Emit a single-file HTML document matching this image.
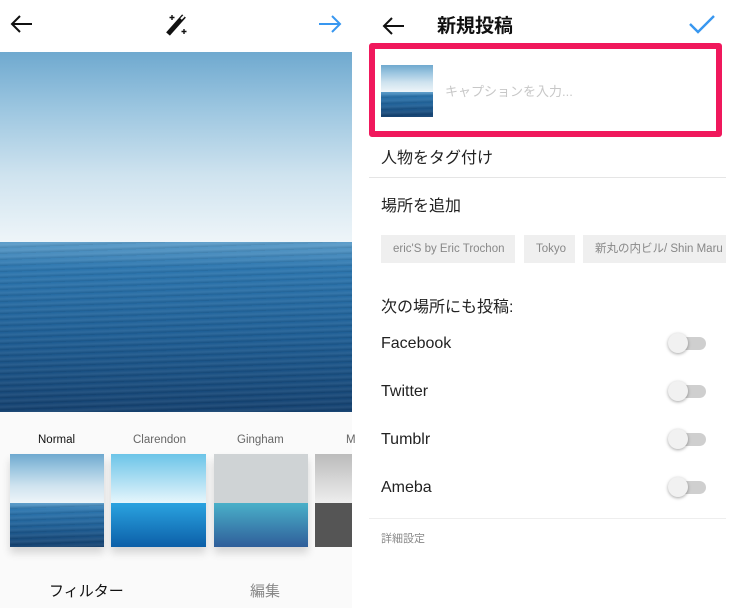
<!DOCTYPE html>
<html><head><meta charset="utf-8"><style>
*{margin:0;padding:0;box-sizing:border-box}
body{width:730px;height:608px;background:#fff;position:relative;overflow:hidden;font-family:"Liberation Sans","Noto Sans CJK JP",sans-serif;color:#222}
.a{position:absolute}
.sky{background:linear-gradient(180deg,#6fa9cf 0%,#9cc6e0 30%,#cfe3ef 65%,#eef5f9 100%)}
.sea{background:repeating-linear-gradient(178deg,rgba(255,255,255,0) 0px,rgba(255,255,255,.08) 3px,rgba(0,0,0,.08) 6px),linear-gradient(180deg,#5b9cc9 0%,#2a74ad 15%,#1c5c93 55%,#123f6e 100%)}
.t{position:absolute;font-size:11.5px;color:#666}
.tog{position:absolute;left:668px;width:38px;height:20px}
.tog .tr{position:absolute;left:8px;top:4px;width:30px;height:13px;border-radius:7px;background:#cfcfcf}
.tog .kn{position:absolute;left:0;top:0;width:20px;height:20px;border-radius:50%;background:#f1f1f1;box-shadow:0 1px 3px rgba(0,0,0,.35)}
.lbl{position:absolute;left:381px;font-size:16px;color:#222}
.chip{position:absolute;top:235px;height:28px;background:#efefef;font-size:11.5px;color:#888;line-height:28px;padding-left:12px;white-space:nowrap;overflow:hidden}
</style></head><body>
<svg class="a" style="left:8px;top:12px" width="28" height="24" viewBox="0 0 28 24"><path d="M24 12H5M12 4L4 12L12 20" stroke="#111" stroke-width="2" fill="none"/></svg>
<svg class="a" style="left:164px;top:10px" width="30" height="28" viewBox="0 0 30 28"><path d="M4 24L20 6" stroke="#111" stroke-width="5"/><path d="M17 9L20 6" stroke="#fff" stroke-width="2"/><path d="M8 5v5M5.5 7.5h5M20 19v5M17.5 21.5h5" stroke="#111" stroke-width="1.4"/></svg>
<svg class="a" style="left:316px;top:12px" width="28" height="24" viewBox="0 0 28 24"><path d="M3 12H23M16 4L24 12L16 20" stroke="#3897f0" stroke-width="2" fill="none"/></svg>
<div class="a sky" style="left:0;top:52px;width:352px;height:190px"></div>
<div class="a sea" style="left:0;top:242px;width:352px;height:170px"></div>
<div class="a" style="left:0;top:412px;width:352px;height:196px;background:#fafafa"></div>
<div class="t" style="left:38px;top:434px;color:#111">Normal</div>
<div class="t" style="left:133px;top:434px">Clarendon</div>
<div class="t" style="left:237px;top:434px">Gingham</div>
<div class="t" style="left:346px;top:434px">M</div>
<div class="a" style="left:10px;top:454px;width:94px;height:93px;box-shadow:0 6px 8px rgba(0,0,0,.15)"><div class="sky" style="height:49px"></div><div class="sea" style="height:44px"></div></div>
<div class="a" style="left:111px;top:454px;width:95px;height:93px;box-shadow:0 6px 8px rgba(0,0,0,.15)"><div style="height:49px;background:linear-gradient(#6cc4e8,#e6f6fc)"></div><div style="height:44px;background:linear-gradient(#2aa3e0,#0c5fa8)"></div></div>
<div class="a" style="left:214px;top:454px;width:94px;height:93px;box-shadow:0 6px 8px rgba(0,0,0,.15)"><div style="height:49px;background:#cfd3d5"></div><div style="height:44px;background:linear-gradient(#4ab0c9,#2f5e9a)"></div></div>
<div class="a" style="left:315px;top:454px;width:37px;height:93px"><div style="height:49px;background:linear-gradient(#bbb,#eee)"></div><div style="height:44px;background:#555"></div></div>
<div class="a" style="left:49px;top:580px;font-size:15px;color:#111">フィルター</div>
<div class="a" style="left:250px;top:580px;font-size:15px;color:#888">編集</div>
<svg class="a" style="left:380px;top:14px" width="28" height="24" viewBox="0 0 28 24"><path d="M24 12H5M12 4L4 12L12 20" stroke="#111" stroke-width="2" fill="none"/></svg>
<div class="a" style="left:437px;top:11px;font-size:19px;font-weight:bold;color:#111">新規投稿</div>
<svg class="a" style="left:688px;top:13px" width="28" height="22" viewBox="0 0 28 22"><path d="M2 11L10 19L26 3" stroke="#3897f0" stroke-width="2.4" fill="none"/></svg>
<div class="a" style="left:369px;top:43px;width:353px;height:94px;border:6px solid #f0185c;border-radius:3px"></div>
<div class="a" style="left:381px;top:65px;width:52px;height:52px"><div class="sky" style="height:27px"></div><div class="sea" style="height:25px"></div></div>
<div class="a" style="left:445px;top:81px;font-size:13px;color:#c7c7c7">キャプションを入力...</div>
<div class="lbl" style="top:144px">人物をタグ付け</div>
<div class="a" style="left:369px;top:177px;width:357px;height:1px;background:#e5e5e5"></div>
<div class="lbl" style="top:192px">場所を追加</div>
<div class="chip" style="left:381px;width:134px">eric'S by Eric Trochon</div>
<div class="chip" style="left:524px;width:51px">Tokyo</div>
<div class="chip" style="left:583px;width:143px">新丸の内ビル/ Shin Maru</div>
<div class="lbl" style="top:293px">次の場所にも投稿:</div>
<div class="lbl" style="top:335px">Facebook</div>
<div class="lbl" style="top:383px">Twitter</div>
<div class="lbl" style="top:431px">Tumblr</div>
<div class="lbl" style="top:479px">Ameba</div>
<div class="tog" style="top:333px"><div class="tr"></div><div class="kn"></div></div>
<div class="tog" style="top:381px"><div class="tr"></div><div class="kn"></div></div>
<div class="tog" style="top:429px"><div class="tr"></div><div class="kn"></div></div>
<div class="tog" style="top:477px"><div class="tr"></div><div class="kn"></div></div>
<div class="a" style="left:369px;top:518px;width:357px;height:1px;background:#eee"></div>
<div class="a" style="left:381px;top:530px;font-size:11px;color:#888">詳細設定</div>
</body></html>
